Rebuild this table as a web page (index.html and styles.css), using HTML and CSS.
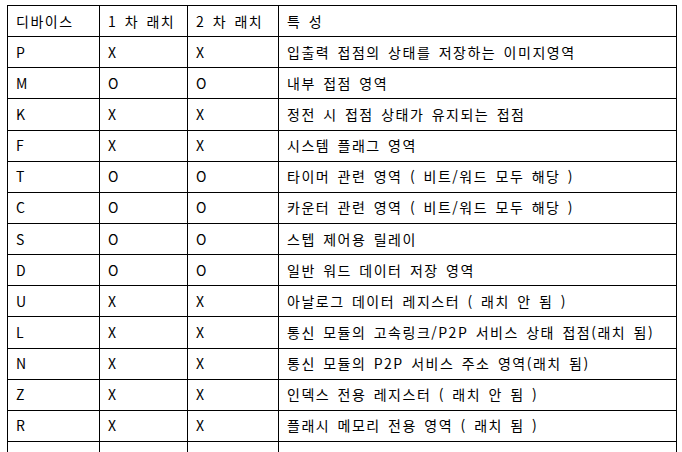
FILE: index.html
```html
<!DOCTYPE html>
<html lang="ko">
<head>
<meta charset="utf-8">
<link rel="stylesheet" href="styles.css">
</head>
<body>
<table class="dev-table">
  <colgroup>
    <col class="c1"><col class="c2"><col class="c3"><col class="c4">
  </colgroup>
  <tr><td>디바이스</td><td>1 차 래치</td><td>2 차 래치</td><td>특 성</td></tr>
  <tr><td>P</td><td>X</td><td>X</td><td>입출력 접점의 상태를 저장하는 이미지영역</td></tr>
  <tr><td>M</td><td>O</td><td>O</td><td>내부 접점 영역</td></tr>
  <tr><td>K</td><td>X</td><td>X</td><td>정전 시 접점 상태가 유지되는 접점</td></tr>
  <tr><td>F</td><td>X</td><td>X</td><td>시스템 플래그 영역</td></tr>
  <tr><td>T</td><td>O</td><td>O</td><td>타이머 관련 영역 ( 비트/워드 모두 해당 )</td></tr>
  <tr><td>C</td><td>O</td><td>O</td><td>카운터 관련 영역 ( 비트/워드 모두 해당 )</td></tr>
  <tr><td>S</td><td>O</td><td>O</td><td>스텝 제어용 릴레이</td></tr>
  <tr><td>D</td><td>O</td><td>O</td><td>일반 워드 데이터 저장 영역</td></tr>
  <tr><td>U</td><td>X</td><td>X</td><td>아날로그 데이터 레지스터 ( 래치 안 됨 )</td></tr>
  <tr><td>L</td><td>X</td><td>X</td><td>통신 모듈의 고속링크/P2P 서비스 상태 접점(래치 됨)</td></tr>
  <tr><td>N</td><td>X</td><td>X</td><td>통신 모듈의 P2P 서비스 주소 영역(래치 됨)</td></tr>
  <tr><td>Z</td><td>X</td><td>X</td><td>인덱스 전용 레지스터 ( 래치 안 됨 )</td></tr>
  <tr><td>R</td><td>X</td><td>X</td><td>플래시 메모리 전용 영역 ( 래치 됨 )</td></tr>
  <tr class="tail"><td></td><td></td><td></td><td></td></tr>
</table>
</body>
</html>
```
FILE: styles.css
```css
html, body {
  margin: 0;
  padding: 0;
  background: #fff;
  overflow: hidden;
  height: 452px;
}
.dev-table {
  margin: 5px 0 0 7px;
  border-collapse: collapse;
  table-layout: fixed;
  width: 669px;
  font-family: "Noto Sans CJK KR", "Noto Sans", sans-serif;
  font-size: 14px;
  color: #000;
}
.c1 { width: 92px; }
.c2 { width: 88px; }
.c3 { width: 91px; }
.c4 { width: 398px; }
.dev-table td {
  border: 1px solid #000;
  height: 31.15px;
  padding: 0 0 1px 8px;
  box-sizing: border-box;
  white-space: nowrap;
  vertical-align: middle;
  line-height: 1;
  letter-spacing: 1.5px;
  word-spacing: 2px;
}
.dev-table tr.tail td {
  border-bottom: none;
}
```
